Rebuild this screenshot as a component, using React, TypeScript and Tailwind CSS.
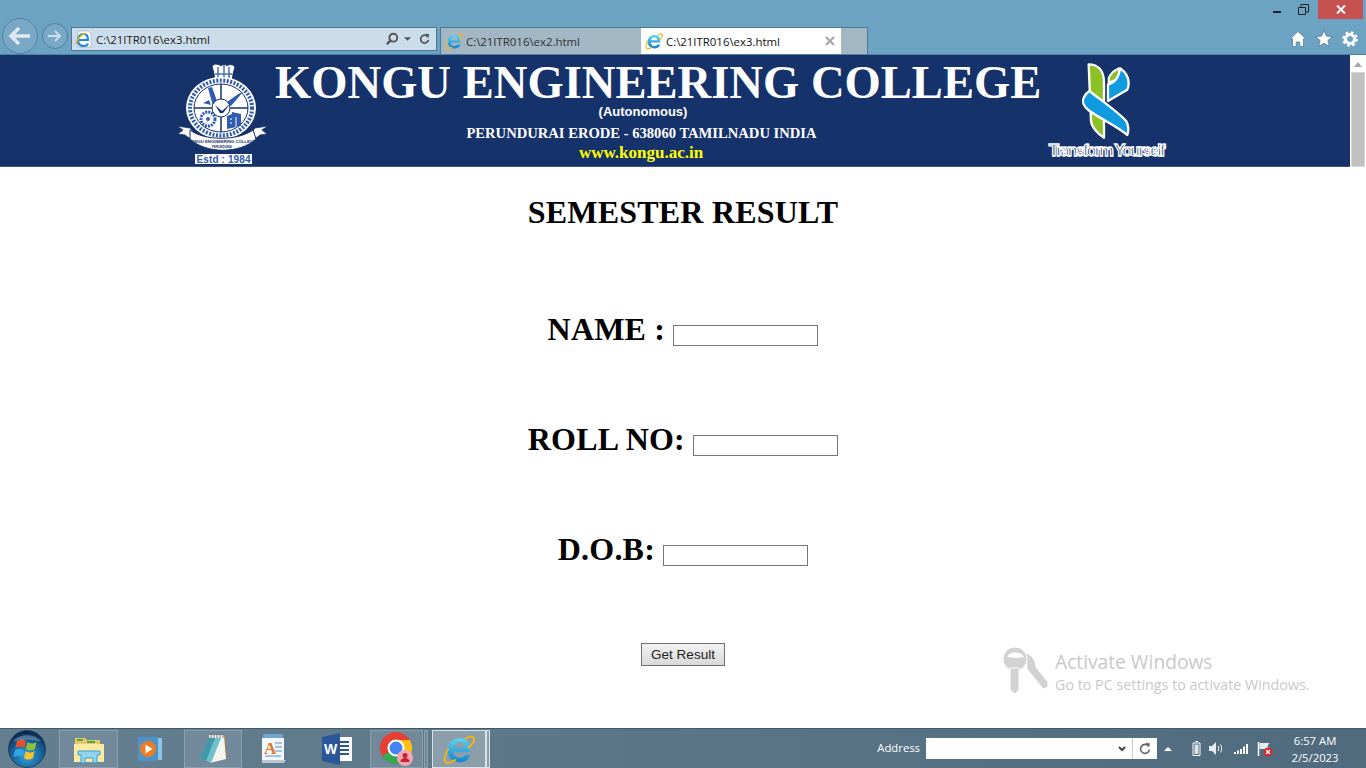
import { useId } from 'react';

const IeIcon = ({ size = 18 }: { size?: number }) => {
  const id = useId();
  return (
    <svg width={size} height={size} viewBox="0 0 48 48" className="shrink-0">
      <defs>
        <linearGradient id={id} x1="0" y1="0" x2="0" y2="1">
          <stop offset="0" stopColor="#5ad4f6" />
          <stop offset="1" stopColor="#1383cf" />
        </linearGradient>
      </defs>
      <path
        d="M41 28H16c0 6 4 9 9 9 4 0 7-2 8-4h8c-2 7-8 11-16 11-11 0-18-8-18-18S14 8 25 8s17 8 16 20zM16 22h17c0-5-3-8-8-8s-9 3-9 8z"
        fill={`url(#${id})`}
        fillRule="evenodd"
      />
      <path d="M33 9c6-4 11-5 13-2 2 4-3 11-9 16" fill="none" stroke="#f3b31b" strokeWidth="3" />
      <path d="M8 23C3 33 1 41 4 44c3 2 9 0 15-4" fill="none" stroke="#f3b31b" strokeWidth="3" />
    </svg>
  );
};

const Crest = () => (
  <svg width="93" height="104" viewBox="0 0 93 104" className="shrink-0">
    {/* crown */}
    <path d="M35 5c3-3 7-2 9 0 2-2 5-2 6 0 2-2 6-2 8 1l-2 7-1 9H38l-1-9z" fill="#fff" stroke="#16326b" />
    <path d="M41 6v15M47 4v17M52 6v15M38 13h17" stroke="#4b6fb5" strokeWidth="1.5" fill="none" />
    {/* outer ring */}
    <ellipse cx="44" cy="47" rx="35" ry="31" fill="#fff" />
    <ellipse cx="44" cy="47" rx="31" ry="27.500" fill="none" stroke="#2f5bb0" strokeWidth="4" strokeDasharray="2 1.500" />
    <ellipse cx="44" cy="47" rx="27" ry="24" fill="#fff" stroke="#16326b" />
    <path d="M44 23v48M17 47h54" stroke="#16326b" strokeWidth="1.500" />
    {/* quadrants */}
    <path d="M31 27l4-1 6 17-5 2zM26 42l6-3 2 5z" fill="#2f5bb0" />
    <path d="M50 41c6-4 10-8 16-10l-12 14z" fill="#2f5bb0" />
    <circle cx="31" cy="58" r="7" fill="none" stroke="#2f5bb0" strokeWidth="3" strokeDasharray="2 1" />
    <circle cx="31" cy="58" r="2" fill="#2f5bb0" />
    <path d="M50 68V55l5-2v-2l9 2v12z" fill="#2f5bb0" />
    <path d="M53 58h2M53 62h2M59 56v10" stroke="#fff" strokeWidth="1" />
    {/* centre badge */}
    <circle cx="44" cy="47" r="9" fill="#fff" stroke="#16326b" />
    <path d="M38 44l7 6 9-8-8 10h-3z" fill="#16326b" />
    {/* ribbon */}
    <path d="M0 65l13 2 7 9-8 1-4-3-7-1 5-4z" fill="#fff" stroke="#16326b" strokeWidth=".8" />
    <path d="M91 65l-13 2-7 9 8 1 4-3 7-1-5-4z" fill="#fff" stroke="#16326b" strokeWidth=".8" />
    <path d="M13 69c14 11 48 11 63 0l3 9c-16 15-50 15-66 0z" fill="#fff" stroke="#16326b" />
    <text x="45" y="82" textAnchor="middle" fontSize="4.200" fontWeight="700" fill="#16326b" fontFamily="'Liberation Sans', sans-serif">
      KONGU ENGINEERING COLLEGE
    </text>
    <text x="45" y="87" textAnchor="middle" fontSize="3" fill="#16326b" fontFamily="'Liberation Sans', sans-serif">
      PERUNDURAI
    </text>
    {/* estd plate */}
    <rect x="18" y="93" width="57" height="10" fill="#fff" />
    <text x="46.500" y="101.500" textAnchor="middle" textLength="54" fontSize="10" fontWeight="700" fill="#2f5bb0" fontFamily="'Liberation Sans', sans-serif">
      Estd : 1984
    </text>
  </svg>
);

const TransformLogo = () => (
  <svg width="120" height="100" viewBox="51 20 360 300" className="shrink-0">
    <path d="M176 30c29 0 46 20 46 55v165c-17-10-37-30-39-50z" fill="#8cc225" stroke="#fff" strokeWidth="7" strokeLinejoin="round" />
    <path d="M236 72c4-12 17-24 30-30l4 30-34 12z" fill="#8cc225" stroke="#fff" strokeWidth="6" strokeLinejoin="round" />
    <path d="M270 42c22 14 32 40 22 64l-58 34V90c18-4 32-16 36-48z" fill="#0f9be0" stroke="#fff" strokeWidth="7" strokeLinejoin="round" />
    <path d="M178 110c22 18 92 66 112 92 6 14 6 28 2 40-32-27-92-55-117-75-15-11-20-26-13-39 4-8 10-14 16-18z" fill="#0f9be0" stroke="#fff" strokeWidth="7" strokeLinejoin="round" />
    <text
      x="231"
      y="304"
      textAnchor="middle"
      textLength="350"
      fontSize="50"
      fontFamily="'Liberation Sans', sans-serif"
      fill="#16326b"
      stroke="#fff"
      strokeWidth="4"
    >
      Transform Yourself
    </text>
  </svg>
);

const Chrome = () => (
  <div className="flex h-[55px] items-end border-b border-[#4d7f9e] bg-[#6ca2c2]">
    <div className="flex items-center pl-[2px]">
      <button className="flex h-[36px] w-[36px] items-center justify-center rounded-full border border-[#4f7f9d] bg-[#78a8c5]">
        <svg width="24" height="20" viewBox="0 0 24 20">
          <path d="M22 10H4M11 2l-8 8 8 8" fill="none" stroke="#dfe9f0" strokeWidth="3.5" />
        </svg>
      </button>
      <button className="ml-[4px] flex h-[26px] w-[26px] items-center justify-center rounded-full border border-[#4f7f9d] bg-[#78a8c5]">
        <svg width="16" height="14" viewBox="0 0 16 14">
          <path d="M1 7h12M8 2l5 5-5 5" fill="none" stroke="#cddde8" strokeWidth="2" />
        </svg>
      </button>
    </div>
    <div className="mb-[3px] ml-[3px] flex h-[24px] w-[366px] items-center border border-[#4b7a97] bg-[#cbdcea] pl-[3px] pr-[6px]">
      <svg width="17" height="18" viewBox="0 0 17 18" className="shrink-0">
        <path d="M3 1h10l3 3v13H3z" fill="#fff" stroke="#b8c0c8" />
        <path d="M4 10h9c0-3-1-6-4.500-6S3 7 3 10.500 5.500 16 9 16c2 0 3.500-1 4-2.500" fill="none" stroke="#1d8bd6" strokeWidth="2.200" />
        <path d="M1 14c1-5 5-9 10-11" fill="none" stroke="#f0b31b" strokeWidth="1.500" />
      </svg>
      <span className="ml-[4px] flex-1 pt-px text-[11.4px] text-[#1a1a1a]">C:\21ITR016\ex3.html</span>
      <svg width="14" height="14" viewBox="0 0 16 16">
        <circle cx="9.500" cy="6.500" r="4.500" fill="none" stroke="#555" strokeWidth="2.200" />
        <path d="M6.500 9.500L2 14" stroke="#555" strokeWidth="2.800" />
      </svg>
      <svg width="7" height="4" viewBox="0 0 8 4" className="ml-[5px]">
        <path d="M0 0h8L4 4z" fill="#555" />
      </svg>
      <svg width="11" height="12" viewBox="0 0 14 14" className="ml-[8px]">
        <path d="M11 4a5 5 0 1 0 1 4" fill="none" stroke="#555" strokeWidth="2.200" />
        <path d="M8 0l5 1-1 5z" fill="#555" />
      </svg>
    </div>
    <div className="ml-[3px] flex h-[27px] w-[428px] border border-b-0 border-[#4b7a97] bg-[#a2b6c3]">
      <div className="flex w-[200px] items-center gap-[3px] pl-[4px] text-[11.4px] text-[#333]">
        <IeIcon />
        <span className="pt-px">C:\21ITR016\ex2.html</span>
      </div>
      <div className="flex w-[200px] items-center gap-[3px] bg-white pl-[4px] pr-[6px] text-[11.4px] text-[#111]">
        <IeIcon />
        <span className="flex-1 pt-px">C:\21ITR016\ex3.html</span>
        <svg width="10" height="10" viewBox="0 0 10 10">
          <path d="M1 1l8 8M9 1l-8 8" stroke="#a8a8a8" strokeWidth="2.200" />
        </svg>
      </div>
    </div>
    <div className="ml-auto flex h-full flex-col items-end">
      <div className="flex h-[19px] items-start">
        <span className="mr-[17px] mt-[11px] h-[2px] w-[8px] bg-[#222]" />
        <svg width="11" height="11" viewBox="0 0 11 11" className="mr-[9px] mt-[4px]">
          <path d="M.5 3.500h7v7h-7zM3 3V.5h7.500V8H8" fill="none" stroke="#222" />
        </svg>
        <div className="mr-[3px] flex h-[19px] w-[45px] items-center justify-center bg-[#c75050]">
          <svg width="10" height="9" viewBox="0 0 10 9">
            <path d="M1 .5l8 8M9 .5l-8 8" stroke="#fff" strokeWidth="2" />
          </svg>
        </div>
      </div>
      <div className="mr-[8px] mt-[11px] flex items-center gap-[9px]">
        <svg width="16" height="16" viewBox="0 0 16 16">
          <path d="M8 .5l7.800 7.300H13.500V15.500H9.800v-4.500H6.200v4.500H2.500V7.800H.2z" fill="#fff" stroke="#4f7f9d" strokeWidth=".8" />
        </svg>
        <svg width="18" height="17" viewBox="0 0 17 16">
          <path d="M8.500 .5l2.300 5.200 5.700.5-4.300 3.700 1.300 5.600-5-3-5 3 1.300-5.600L.5 6.200l5.700-.5z" fill="#fff" stroke="#4f7f9d" strokeWidth=".8" />
        </svg>
        <svg width="16" height="16" viewBox="0 0 16 16">
          <circle cx="8" cy="8" r="4.500" fill="none" stroke="#fff" strokeWidth="3" />
          <circle cx="8" cy="8" r="6.500" fill="none" stroke="#fff" strokeWidth="2.600" strokeDasharray="2.600 2.500" />
        </svg>
      </div>
    </div>
  </div>
);

const Banner = () => (
  <div className="flex h-[112px]">
    <div className="flex min-w-0 flex-1 items-start border-b border-[#3c5488] bg-[#16326b] pl-[177px] pt-[6px] font-['Liberation_Serif',serif] font-bold text-white">
      <Crest />
      <div className="ml-[5px] w-[766px] text-center">
        <h1 className="whitespace-nowrap text-left text-[46.600px] leading-[42px]">KONGU ENGINEERING COLLEGE</h1>
        <div className="mr-[30px] mt-[1px] font-['Liberation_Sans',sans-serif] text-[13px] leading-[16px]">(Autonomous)</div>
        <div className="mr-[33px] mt-[5px] text-[14.600px] leading-[16px]">PERUNDURAI ERODE - 638060 TAMILNADU INDIA</div>
        <div className="mr-[34px] mt-[4px] text-[17px] leading-[16px] text-[#ffff00]">www.kongu.ac.in</div>
      </div>
      <div className="ml-[6px]">
        <TransformLogo />
      </div>
    </div>
    <div className="flex w-[16px] flex-col items-center bg-white">
      <svg width="8" height="5" viewBox="0 0 8 5" className="mt-[7px]">
        <path d="M4 0l4 5H0z" fill="#a6a6a6" />
      </svg>
      <div className="mt-[5px] w-[14px] flex-1 border border-[#d8d8d8] bg-[#c0c0c0]" />
    </div>
  </div>
);

const FormRow = ({ label }: { label: string }) => (
  <p className="h-[110px] text-center text-[32px] font-bold leading-[37px] tracking-[0.2px]">
    {label} <input type="text" className="h-[21px] w-[145px] border border-[#767676] bg-white align-[-6px]" />
  </p>
);

const Watermark = () => (
  <div className="absolute left-[1002px] top-[478px] flex items-start">
    <svg width="48" height="50" viewBox="0 0 48 50">
      <path d="M24 8c6 2 10 8 10 14l12 15v5l-5 2-16-20z" fill="#d2d2d2" stroke="#fff" />
      <circle cx="13" cy="14" r="12" fill="#d2d2d2" stroke="#fff" />
      <path d="M5 12c2-6 14-6 17 0-4 1-13 1-17 0z" fill="#fff" />
      <path d="M8 23h9v22l-4 4-5-4z" fill="#d2d2d2" stroke="#fff" />
    </svg>
    <div className="ml-[5px] mt-[4px] font-['Open_Sans',sans-serif] text-[#c9c9c9]">
      <div className="text-[19.200px] leading-[26px]">Activate Windows</div>
      <div className="text-[14.300px] leading-[20px]">Go to PC settings to activate Windows.</div>
    </div>
  </div>
);

const Main = () => (
  <main className="relative flex-1 bg-white font-['Liberation_Serif',serif] text-black">
    <h2 className="pt-[27px] text-center text-[32px] font-bold leading-[37px] tracking-[0.2px]">SEMESTER RESULT</h2>
    <div className="mt-[80px]">
      <FormRow label="NAME :" />
      <FormRow label="ROLL NO:" />
      <FormRow label="D.O.B:" />
    </div>
    <div className="mt-[2px] flex justify-center">
      <button className="h-[23px] w-[84px] border border-[#707070] bg-linear-to-b from-[#f2f2f2] to-[#d8d8d8] pt-px font-['Liberation_Sans',sans-serif] text-[13.500px] text-[#222]">
        Get Result
      </button>
    </div>
    <Watermark />
  </main>
);

const StartOrb = () => {
  const id = useId();
  return (
    <svg width="38" height="38" viewBox="0 0 38 38">
      <defs>
        <radialGradient id={id} cx="50%" cy="70%" r="65%">
          <stop offset="0" stopColor="#2fa4dc" />
          <stop offset="0.7" stopColor="#16598f" />
          <stop offset="1" stopColor="#0c2a4c" />
        </radialGradient>
      </defs>
      <circle cx="19" cy="19" r="18.500" fill={`url(#${id})`} stroke="#23435f" />
      <path d="M9 11c3-2 6-2 9 0l-1.500 7c-3-2-6-2-9 0z" fill="#e8502c" />
      <path d="M19.500 12c3 2 6 2 9 0l-1.500 7c-3 2-6 2-9 0z" fill="#8cc23a" />
      <path d="M7 20c3-2 6-2 9 0l-1.500 7c-3-2-6-2-9 0z" fill="#30a5e6" />
      <path d="M17.500 21c3 2 6 2 9 0l-1.500 7c-3 2-6 2-9 0z" fill="#f6c22d" />
      <path d="M5 12C9 3 29 3 33 12 27 9 11 9 5 12z" fill="#fff" fillOpacity=".25" />
    </svg>
  );
};

const TaskBox = ({ active, className, children }: { active?: boolean; className: string; children: React.ReactNode }) => (
  <div
    className={`flex h-[38px] items-center justify-center border ${active ? 'border-[#d8e2e8] bg-[#8b9ea9]' : 'border-[#8ba0ad] bg-[#71899a]'} ${className}`}
  >
    {children}
  </div>
);

const Taskbar = () => (
  <footer className="flex h-[40px] items-center border-t border-[#3f5a6b] bg-linear-to-r from-[#637f90] to-[#4f6b7d] font-['Open_Sans',sans-serif] text-white">
    <div className="ml-[8px] flex w-[38px] justify-center">
      <StartOrb />
    </div>
    <TaskBox className="ml-[13px] w-[59px]">
      <svg width="32" height="30" viewBox="0 0 32 30">
        <path d="M2 4h10l2 2h13v20H2z" fill="#e8c868" />
        <path d="M4 6h6M14 8h8" stroke="#3fae4a" strokeWidth="2" />
        <path d="M1 10h30v18H1z" fill="#fbe9a6" />
        <path d="M5 17h22v4h-3v8h-4v-5h-8v5H8v-8H5z" fill="#8fd3ef" stroke="#3c9fcc" />
      </svg>
    </TaskBox>
    <div className="ml-[14px] flex w-[36px] justify-center">
      <svg width="28" height="28" viewBox="0 0 28 28">
        <path d="M8 3h18v22H8z" fill="#8bc4e6" />
        <path d="M2 2h20v24H2z" fill="#4a94cb" />
        <circle cx="12" cy="14" r="8" fill="#ee7c24" />
        <path d="M9.500 9.500l7 4.500-7 4.500z" fill="#fff" />
      </svg>
    </div>
    <TaskBox className="ml-[16px] w-[58px]">
      <svg width="32" height="34" viewBox="0 0 32 34">
        <path d="M13 3h15l2 24-14 3z" fill="#a27b3d" />
        <path d="M12 3h15l2 24-16 4z" fill="#f5f5f0" />
        <path d="M12 6L3 26l11 5 10-25z" fill="#6fc0c9" />
        <path d="M12 6L3 26l6 3 9-23z" fill="#3f97ab" />
        <path d="M14 1v5M17 1v5M20 1v5M23 1v5M26 1v5" stroke="#777" />
      </svg>
    </TaskBox>
    <div className="ml-[16px] flex w-[32px] justify-center">
      <svg width="26" height="30" viewBox="0 0 26 30">
        <path d="M2 0h20v4H2z" fill="#6fa5cf" />
        <path d="M1 4h22v22H1z" fill="#f3f7fb" />
        <path d="M1 26h24l-2 3H1z" fill="#b9c6d2" />
        <text x="3" y="20" fontSize="17" fontWeight="700" fill="#e0762a" fontFamily="'Liberation Serif', serif">A</text>
        <path d="M14 9h7M14 13h7M14 17h7M4 22h16" stroke="#4a94cb" />
      </svg>
    </div>
    <div className="ml-[22px] flex w-[50px] justify-center">
      <svg width="30" height="32" viewBox="0 0 30 32">
        <path d="M12 4h18v24H12z" fill="#fff" />
        <path d="M17 9h10M17 13h10M17 17h10M17 21h10" stroke="#2b579a" strokeWidth="2" />
        <path d="M0 4l18-4v32L0 28z" fill="#2b579a" />
        <text x="2" y="21" fontSize="14" fontWeight="700" fill="#fff" fontFamily="'Liberation Sans', sans-serif">W</text>
      </svg>
    </div>
    <TaskBox className="ml-[8px] w-[53px]">
      <svg width="34" height="34" viewBox="0 0 34 34">
        <circle cx="16" cy="16" r="16" fill="#e53f33" />
        <path d="M16 16L2.100 24A16 16 0 0 0 16 32c2 0 4-.4 6-1.200z" fill="#35a853" />
        <path d="M16 8h14a16 16 0 0 1-8 22.800L16 16z" fill="#fbc014" />
        <circle cx="16" cy="16" r="7.500" fill="#4286f5" stroke="#fff" strokeWidth="2" />
        <circle cx="25" cy="26" r="8" fill="#f6a6b2" />
        <circle cx="25" cy="23.500" r="2.500" fill="#c5222f" />
        <path d="M20.500 30c0-3 2-4 4.500-4s4.500 1 4.500 4z" fill="#c5222f" />
      </svg>
    </TaskBox>
    <div className="ml-px h-[38px] w-[4px] border border-[#8ba0ad] bg-[#71899a]" />
    <TaskBox active className="ml-[4px] w-[54px]">
      <IeIcon size={32} />
    </TaskBox>
    <div className="h-[38px] w-[4px] border border-[#d8e2e8] bg-[#8b9ea9]" />

    <span className="ml-auto text-[11.300px]">Address</span>
    <div className="ml-[6px] flex h-[21px] w-[231px] items-center justify-end bg-white">
      <svg width="8" height="6" viewBox="0 0 8 6" className="mr-[6px]">
        <path d="M1 1l3 3 3-3" fill="none" stroke="#444" strokeWidth="2" />
      </svg>
      <div className="flex h-full w-[25px] items-center justify-center border-l border-[#ccc]">
        <svg width="12" height="13" viewBox="0 0 12 13">
          <path d="M9.500 4a4.500 4.500 0 1 0 1 3.500" fill="none" stroke="#666" strokeWidth="1.600" />
          <path d="M6.500 .5l4.500 1-1 4z" fill="#666" />
        </svg>
      </div>
    </div>
    <svg width="8" height="4" viewBox="0 0 8 4" className="ml-[7px]">
      <path d="M4 0l4 4H0z" fill="#fff" />
    </svg>
    <svg width="9" height="15" viewBox="0 0 9 15" className="ml-[20px]">
      <path d="M3 .5h3M1 2h7v12.500H1z" fill="none" stroke="#fff" />
      <path d="M2.500 3.500h4v9.500h-4z" fill="#dce4e8" />
    </svg>
    <svg width="15" height="13" viewBox="0 0 15 13" className="ml-[8px]">
      <path d="M0 4h3l4-4v13L3 9H0z" fill="#e6ecef" />
      <path d="M9 4c1 1.500 1 3.500 0 5M11.500 2.500c1.500 2.500 1.500 5.500 0 8" fill="none" stroke="#fff" />
    </svg>
    <svg width="15" height="10" viewBox="0 0 15 10" className="ml-[10px]">
      <path d="M0 8h2v2H0zM3 6.500h2V10H3zM6 5h2v5H6zM9 2.500h2V10H9zM12 0h2v10h-2z" fill="#fff" />
    </svg>
    <svg width="16" height="16" viewBox="0 0 16 16" className="ml-[8px]">
      <path d="M1.500 1v14" stroke="#fff" strokeWidth="1.500" />
      <path d="M2.500 2h10l-2 3 2 3h-10z" fill="#e6ecef" />
      <circle cx="11" cy="11" r="4.500" fill="#d8232a" />
      <path d="M9 9l4 4M13 9l-4 4" stroke="#fff" strokeWidth="1.300" />
    </svg>
    <div className="ml-[7px] mr-[16px] w-[70px] text-center text-[11.300px] leading-[17px]">
      <div>6:57 AM</div>
      <div>2/5/2023</div>
    </div>
  </footer>
);

export default function App() {
  return (
    <div className="flex h-screen flex-col overflow-hidden font-['Open_Sans',sans-serif]">
      <Chrome />
      <Banner />
      <Main />
      <Taskbar />
    </div>
  );
}
